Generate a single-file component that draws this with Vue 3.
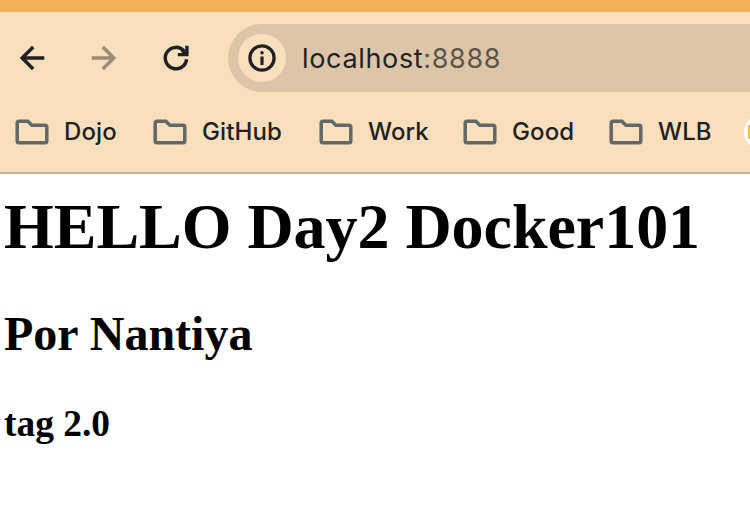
<script setup>
const bookmarks = [
  { name: 'Dojo', width: 138 },
  { name: 'GitHub', width: 166 },
  { name: 'Work', width: 144 },
  { name: 'Good', width: 146 },
  { name: 'WLB', width: 134 },
]
</script>

<template>
  <div class="window">
    <div class="tabstrip"></div>
    <header class="chrome">
      <div class="toolbar">
        <svg class="nav" viewBox="0 0 32 32"><path d="M28.300 16H6.500M17.200 5 6.200 16l11 11" /></svg>
        <svg class="nav muted" viewBox="0 0 32 32"><path d="M3.700 16h21.800M14.800 5l11 11-11 11" /></svg>
        <svg class="nav reload" viewBox="0 0 32 32">
          <path d="M26.600 17.200A10.700 10.700 0 1 1 24 9" />
          <path class="corner" d="M25.200 3.800h3.400v10.400H17.800V11h4.600l-1.400-1.800 2-2.200 2.200 1.800z" />
        </svg>
        <div class="omnibox">
          <span class="info">
            <svg viewBox="0 0 32 32">
              <circle cx="16" cy="16" r="12.100" />
              <path class="solid" d="M14.400 14.400h3.200V23h-3.200z" />
              <circle class="solid" cx="16" cy="10.700" r="1.800" />
            </svg>
          </span>
          <span class="url">localhost<span class="port">:8888</span></span>
        </div>
      </div>
      <nav class="bookmarks">
        <div v-for="b in bookmarks" :key="b.name" class="bookmark" :style="{ width: b.width + 'px' }">
          <svg class="folder" viewBox="0 0 34 26"><path d="M4 2.200h8.800l4.200 4H30q1.800 0 1.800 1.800V22q0 1.800-1.800 1.800H4q-1.800 0-1.800-1.800V4q0-1.800 1.800-1.800z" /></svg>
          <span>{{ b.name }}</span>
        </div>
        <span class="favicon"><i></i></span>
      </nav>
    </header>
    <main class="page">
      <h1>HELLO Day2 Docker101</h1>
      <h2>Por Nantiya</h2>
      <h3>tag 2.0</h3>
    </main>
  </div>
</template>

<style>
body { margin: 0; overflow: hidden; background: #fff; }
</style>

<style scoped>
.window { width: 750px; height: 526px; overflow: hidden; background: #fff; }
.tabstrip { height: 12px; background: #f3af57; }
.chrome {
  box-sizing: border-box;
  height: 162px;
  background: #fadfbc;
  border-bottom: 2px solid #c8b296;
  font-family: Inter, "Liberation Sans", sans-serif;
  color: #1f2125;
}
.toolbar { display: flex; align-items: center; height: 92px; padding-left: 16px; }
.nav { flex: none; width: 32px; height: 32px; margin-right: 40px; fill: none; stroke: #1f2125; stroke-width: 3.5; }
.muted { stroke: #9b8b78; }
.reload { margin-right: 36px; }
.corner { fill: #1f2125; stroke: none; }
.omnibox {
  display: flex;
  align-items: center;
  flex: none;
  box-sizing: border-box;
  width: 560px;
  height: 68px;
  padding-left: 10px;
  border-radius: 34px;
  background: #ddc6a7;
}
.info { display: flex; align-items: center; justify-content: center; width: 48px; height: 48px; border-radius: 50%; background: #fadfbc; }
.info svg { width: 32px; height: 32px; fill: none; stroke: #1f2125; stroke-width: 3.3; }
.info .solid { fill: #1f2125; stroke: none; }
.url { margin-left: 16px; padding-top: 2px; font-size: 27px; line-height: 34px; letter-spacing: 0.66px; }
.port { color: #5c544b; }
.bookmarks { display: flex; align-items: center; height: 56px; padding-left: 15px; font-size: 24px; font-weight: 500; line-height: 32px; letter-spacing: 0.1px; }
.bookmark { display: flex; align-items: center; flex: none; gap: 15px; }
.folder { flex: none; width: 34px; height: 26px; fill: none; stroke: #646769; stroke-width: 3.500; }
.favicon { display: flex; align-items: center; justify-content: center; flex: none; width: 34px; height: 34px; margin-left: 1px; border-radius: 50%; background: #fff; }
.favicon i { width: 26px; height: 14px; border-radius: 2px; background: linear-gradient(#e88f72 0 2px, #f2bd42 2px 12px, #b5b268 12px); }
.page { padding: 16px 4px 0; font-family: "Liberation Serif", serif; color: #000; }
h1, h2, h3 { margin: 0; font-weight: 700; white-space: nowrap; }
h1 { font-size: 64px; line-height: 74px; letter-spacing: -0.04px; }
h2 { margin-top: 43px; font-size: 48px; line-height: 54px; }
h3 { margin-top: 42px; font-size: 37.440px; line-height: 42px; }
</style>
